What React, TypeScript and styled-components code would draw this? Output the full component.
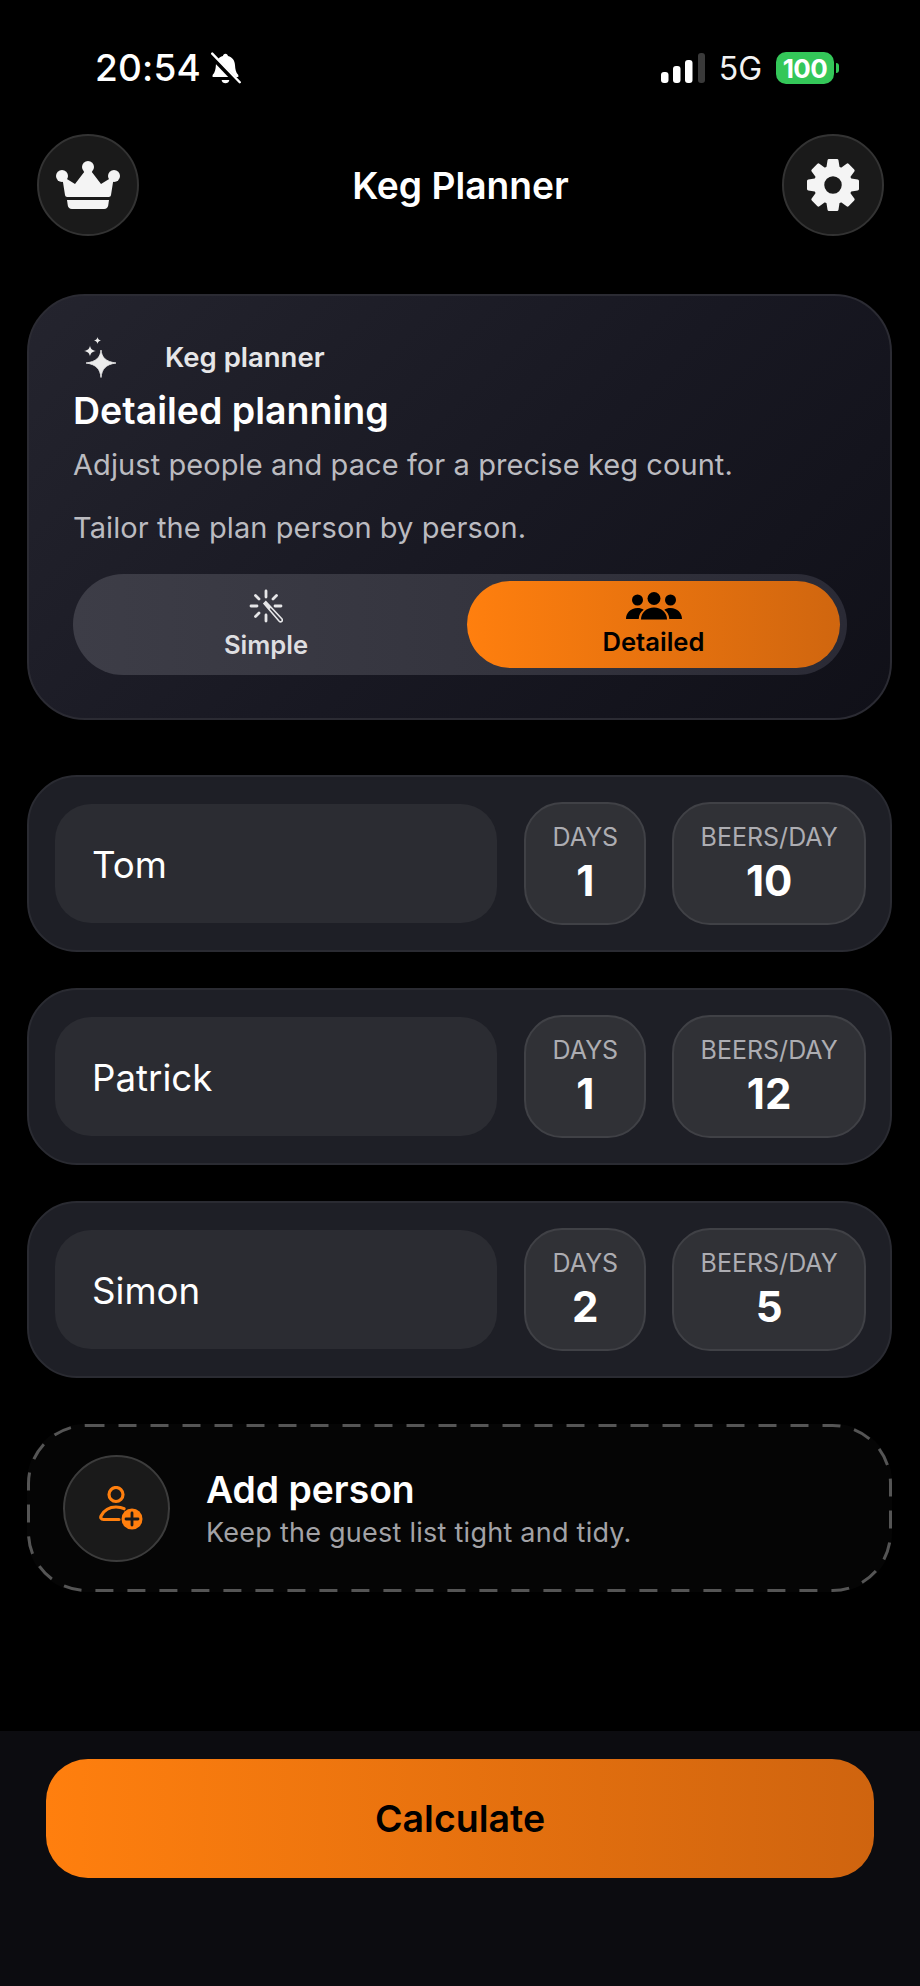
import React from 'react';
import styled, { createGlobalStyle } from 'styled-components';

const GlobalStyle = createGlobalStyle`
	html, body {
		margin: 0;
		padding: 0;
		background: #000;
		font-family: Inter, "Liberation Sans", sans-serif;
	}
	* {
		box-sizing: border-box;
	}
`;

const Page = styled.div`
	width: 920px;
	height: 1986px;
	display: flex;
	flex-direction: column;
	background: #000;
	color: #fff;
	overflow: hidden;
`;

const Main = styled.main`
	flex: 1;
	display: flex;
	flex-direction: column;
	padding: 0 28px 0 27px;
`;

const StatusBar = styled.div`
	height: 135px;
	margin: 0 -28px 0 -27px;
	padding: 46px 81px 0 95px;
	display: flex;
	justify-content: space-between;
	align-items: flex-start;
`;

const StatusLeft = styled.div`
	display: flex;
	align-items: center;
	gap: 10px;
	height: 44px;
`;

const StatusRight = styled.div`
	display: flex;
	align-items: center;
	height: 44px;
`;

const Clock = styled.span`
	font-size: 37px;
	font-weight: 500;
	line-height: 44px;
	letter-spacing: 0.2px;
`;

const NetworkLabel = styled.span`
	font-size: 32px;
	font-weight: 400;
	color: #f2f2f2;
	margin: 0 14px 0 14px;
`;

const Battery = styled.span`
	width: 58px;
	height: 32px;
	border-radius: 10px;
	background: #34c759;
	color: #fff;
	font-size: 26px;
	font-weight: 700;
	display: flex;
	align-items: center;
	justify-content: center;
	letter-spacing: -0.6px;
`;

const BatteryCap = styled.span`
	width: 3px;
	height: 10px;
	margin-left: 2px;
	border-radius: 0 3px 3px 0;
	background: #34c759;
`;

const Header = styled.header`
	height: 100px;
	margin: 0 8px 0 10px;
	display: flex;
	align-items: center;
	justify-content: space-between;
`;

const RoundButton = styled.div`
	width: 102px;
	height: 102px;
	border-radius: 50%;
	background: #1a1a1a;
	border: 2px solid #333;
	display: flex;
	align-items: center;
	justify-content: center;
`;

const Title = styled.h1`
	margin: 0;
	font-size: 37.2px;
	font-weight: 600;
	color: #fff;
`;

const HeroCard = styled.section`
	margin-top: 59px;
	height: 426px;
	border-radius: 58px;
	border: 2px solid #2b2b33;
	background: linear-gradient(135deg, #24242e 0%, #181822 55%, #101018 100%);
	padding: 38px 44px 0 44px;
	display: flex;
	flex-direction: column;
`;

const Eyebrow = styled.div`
	display: flex;
	align-items: center;
	height: 46px;
	color: #e6e6e8;
	font-size: 27.5px;
	font-weight: 600;
`;

const SparkleSlot = styled.span`
	width: 92px;
	padding-left: 9px;
	display: flex;
	align-items: center;
`;

const HeroTitle = styled.h2`
	margin: 6px 0 0;
	font-size: 37.5px;
	line-height: 50px;
	font-weight: 600;
	color: #fff;
`;

const HeroText = styled.p`
	margin: 8px 0 0;
	font-size: 29px;
	line-height: 42px;
	font-weight: 400;
	letter-spacing: 0.08px;
	color: #bbbbc0;

	& + & {
		margin-top: 21px;
	}
`;

const ModeSwitch = styled.div`
	margin-top: 25px;
	height: 101px;
	border-radius: 51px;
	background: linear-gradient(90deg, #3d3d47 0%, #34343e 55%, #2a2a35 100%);
	padding: 7px;
	display: grid;
	grid-template-columns: 387px 373px;
	margin-right: -1px;
`;

const ModeTab = styled.div<{ $active?: boolean }>`
	border-radius: 44px;
	display: flex;
	flex-direction: column;
	align-items: center;
	justify-content: center;
	padding-right: ${(p) => (p.$active ? '0' : '15px')};
	gap: ${(p) => (p.$active ? '7px' : '7px')};
	font-size: 25.6px;
	line-height: 30px;
	font-weight: 600;
	color: ${(p) => (p.$active ? '#000' : '#dedee0')};
	background: ${(p) => (p.$active ? 'linear-gradient(90deg, #ff7f0e 0%, #d0660f 100%)' : 'transparent')};
`;

const PeopleList = styled.div`
	margin-top: 55px;
	display: flex;
	flex-direction: column;
	gap: 36px;
`;

const PersonRow = styled.div`
	height: 177px;
	border-radius: 50px;
	background: #1e1f26;
	border: 2px solid #2a2b32;
	padding: 0 24px 0 26px;
	display: flex;
	align-items: center;
`;

const NameField = styled.div`
	width: 443px;
	height: 119px;
	border-radius: 36px;
	background: #2b2c32;
	padding: 2px 0 0 37px;
	margin-right: 27px;
	display: flex;
	align-items: center;
	font-size: 36.7px;
	font-weight: 400;
	color: #fff;
`;

const StatBox = styled.div<{ $wide?: boolean }>`
	width: ${(p) => (p.$wide ? '194px' : '122px')};
	height: 123px;
	margin-right: ${(p) => (p.$wide ? '0' : '26px')};
	border-radius: 38px;
	background: #303136;
	border: 2px solid #404146;
	display: flex;
	flex-direction: column;
	align-items: center;
	padding-top: 18px;
`;

const StatLabel = styled.span`
	font-size: 25px;
	line-height: 30px;
	font-weight: 400;
	color: #adadb2;
`;

const StatValue = styled.span`
	margin-top: 4px;
	font-size: 42px;
	line-height: 50px;
	font-weight: 700;
	color: #fff;
`;

const AddPerson = styled.div`
	position: relative;
	margin-top: 46px;
	height: 168px;
	border-radius: 58px;
	background: #050505;
	padding-left: 36px;
	display: flex;
	align-items: center;
	gap: 36px;
`;

const DashedOutline = styled.svg`
	position: absolute;
	top: 0;
	left: 0;
`;

const AddCircle = styled.div`
	width: 107px;
	height: 107px;
	padding-left: 8px;
	border-radius: 50%;
	background: #1a1a1a;
	border: 2px solid #3c3c3c;
	display: flex;
	align-items: center;
	justify-content: center;
`;

const AddText = styled.div`
	display: flex;
	flex-direction: column;
	padding-top: 3px;
`;

const AddTitle = styled.span`
	font-size: 37.3px;
	line-height: 44px;
	font-weight: 600;
	color: #fff;
`;

const AddHint = styled.span`
	margin-top: 3px;
	font-size: 27px;
	line-height: 36px;
	letter-spacing: 0.25px;
	color: #a2a2a6;
`;

const Footer = styled.footer`
	height: 255px;
	background: #0c0c10;
	padding: 28px 46px 0;
`;

const CalculateButton = styled.div`
	height: 119px;
	border-radius: 42px;
	background: linear-gradient(90deg, #ff7f0e 0%, #cf640f 100%);
	display: flex;
	align-items: center;
	justify-content: center;
	font-size: 37.5px;
	font-weight: 600;
	color: #000;
`;

const Icon = styled.svg`
	display: block;
	flex: none;
`;

const people = [
	{ name: 'Tom', days: 1, beers: 10 },
	{ name: 'Patrick', days: 1, beers: 12 },
	{ name: 'Simon', days: 2, beers: 5 },
];

const BellOff = () => (
	<Icon width="30" height="33" viewBox="2 0 27 30">
		<path d="M15 1.500c1.300 0 2.200.9 2.300 2.200 4 1 6.200 4.200 6.400 8.300.2 3.600.6 6.400 3 9v1.700H3.300V21c2.300-2.600 2.800-5.400 3-9 .2-4.100 2.400-7.300 6.400-8.300.1-1.300 1-2.200 2.300-2.200z" fill="#fff" />
		<path d="M11.500 25.500h7c-.3 1.900-1.700 3-3.500 3s-3.200-1.100-3.500-3z" fill="#fff" />
		<path d="M2 3l25 26" stroke="#000" strokeWidth="5" />
		<path d="M3 1.500l25 26" stroke="#fff" strokeWidth="2.200" strokeLinecap="round" />
	</Icon>
);

const SignalBars = () => (
	<Icon width="44" height="30" viewBox="0 0 44 30">
		<rect x="0" y="19" width="7.500" height="11" rx="3" fill="#fff" />
		<rect x="12" y="13" width="7.500" height="17" rx="3" fill="#fff" />
		<rect x="24" y="7" width="7.500" height="23" rx="3" fill="#fff" />
		<rect x="37" y="0" width="7" height="30" rx="3" fill="#3a3a3a" />
	</Icon>
);

const CrownIcon = () => (
	<Icon width="64" height="48" viewBox="0 0 64 48">
		<g fill="#f4f4f4">
			<circle cx="32" cy="6" r="6" />
			<circle cx="6" cy="15" r="6" />
			<circle cx="58" cy="15" r="6" />
			<path d="M6 15L19 23 32 6 45 23 58 15 55 34c-.2 1.200-1 2-2.200 2H11.200c-1.200 0-2-.8-2.200-2z" />
			<path d="M11 39h42l-.8 5.500c-.4 2.200-1.800 3.500-4 3.500H15.800c-2.200 0-3.600-1.300-4-3.500z" />
		</g>
	</Icon>
);

const GearIcon = () => {
	const teeth = [0, 45, 90, 135, 180, 225, 270, 315];
	return (
		<Icon width="54" height="54" viewBox="0 0 54 54">
			{teeth.map((a) => (
				<path
					key={a}
					d="M23 2.500h8l2 13H21z"
					fill="#f4f4f4"
					stroke="#f4f4f4"
					strokeWidth="3"
					strokeLinejoin="round"
					transform={`rotate(${a} 27 27)`}
				/>
			))}
			<circle cx="27" cy="27" r="14" fill="none" stroke="#f4f4f4" strokeWidth="10.500" />
		</Icon>
	);
};

const Sparkles = () => (
	<Icon width="34" height="42" viewBox="0 0 34 42">
		<path d="M19 14c.8 7.500 4.500 11.500 15 13-10.500 1.500-14 6-15 14.500-1-8.500-4.500-13-15-14.500 10.500-1.500 14.200-5.500 15-13z" fill="#ececec" stroke="#ececec" strokeWidth="0.800" strokeLinejoin="round" />
		<path d="M8 9.500c.5 3.200 2 4.800 6 5.500-4 .7-5.500 2.300-6 5.500-.5-3.200-2-4.800-6-5.500 4-.7 5.500-2.300 6-5.500z" fill="#ececec" />
		<path d="M15.500 1c.3 2 1.200 3 3.500 3.500-2.300.5-3.200 1.500-3.500 3.500-.3-2-1.200-3-3.500-3.500 2.300-.5 3.200-1.500 3.500-3.500z" fill="#ececec" />
	</Icon>
);

const WandRays = () => (
	<Icon width="34" height="34" viewBox="0 0 34 34">
		<g stroke="#e6e6e8" strokeWidth="2.800" strokeLinecap="round" fill="none">
			<path d="M17 2v6M17 26v6M2 17h6M26 17h6M6.500 6.500L10 10M27.500 6.500L24 10M6.500 27.500L10 24" />
		</g>
		<path d="M15 14.500l1.800-1.800 16 17c.8.900.8 1.900 0 2.600s-1.800.7-2.600-.1z" fill="none" stroke="#e6e6e8" strokeWidth="1.600" />
		<path d="M15 14.500l1.800-1.800 5.500 5.800-2.200 2.100z" fill="#e6e6e8" />
	</Icon>
);

const PeopleGroup = () => (
	<Icon width="56" height="28" viewBox="0 0 56 28">
		<circle cx="11.500" cy="8" r="5.500" fill="#000" />
		<circle cx="44.500" cy="8" r="5.500" fill="#000" />
		<circle cx="28" cy="6.500" r="6.500" fill="#000" />
		<path d="M0 27c0-6 4.500-11 11.500-11 2.500 0 4.500.6 6.200 1.700-3 2-4.700 5-5 9.300z" fill="#000" />
		<path d="M56 27c0-6-4.500-11-11.500-11-2.500 0-4.500.6-6.200 1.700 3 2 4.700 5 5 9.300z" fill="#000" />
		<path d="M15 27.500c0-7 5.500-12 13-12s13 5 13 12z" fill="#000" />
	</Icon>
);

const PersonAdd = () => (
	<Icon width="44" height="44" viewBox="0 0 44 44">
		<circle cx="17" cy="8.500" r="7" fill="none" stroke="#ff7f0e" strokeWidth="3.200" />
		<path d="M20 33.500H4.500c-2.500 0-3.300-1.800-2.300-3.800C5 24.500 10 21 17 21c3.500 0 6 .6 8 1.700" fill="none" stroke="#ff7f0e" strokeWidth="3.200" strokeLinecap="round" />
		<circle cx="33" cy="33" r="10.500" fill="#ff7f0e" />
		<path d="M33 27v12M27 33h12" stroke="#1a1a1a" strokeWidth="2.800" strokeLinecap="round" />
	</Icon>
);

const App: React.FC = () => (
	<>
		<GlobalStyle />
		<Page>
			<Main>
				<StatusBar>
					<StatusLeft>
						<Clock>20:54</Clock>
						<BellOff />
					</StatusLeft>
					<StatusRight>
						<SignalBars />
						<NetworkLabel>5G</NetworkLabel>
						<Battery>100</Battery>
						<BatteryCap />
					</StatusRight>
				</StatusBar>

				<Header>
					<RoundButton>
						<CrownIcon />
					</RoundButton>
					<Title>Keg Planner</Title>
					<RoundButton>
						<GearIcon />
					</RoundButton>
				</Header>

				<HeroCard>
					<Eyebrow>
						<SparkleSlot>
							<Sparkles />
						</SparkleSlot>
						Keg planner
					</Eyebrow>
					<HeroTitle>Detailed planning</HeroTitle>
					<HeroText>Adjust people and pace for a precise keg count.</HeroText>
					<HeroText>Tailor the plan person by person.</HeroText>
					<ModeSwitch>
						<ModeTab>
							<WandRays />
							Simple
						</ModeTab>
						<ModeTab $active>
							<PeopleGroup />
							Detailed
						</ModeTab>
					</ModeSwitch>
				</HeroCard>

				<PeopleList>
					{people.map((person) => (
						<PersonRow key={person.name}>
							<NameField>{person.name}</NameField>
							<StatBox>
								<StatLabel>DAYS</StatLabel>
								<StatValue>{person.days}</StatValue>
							</StatBox>
							<StatBox $wide>
								<StatLabel>BEERS/DAY</StatLabel>
								<StatValue>{person.beers}</StatValue>
							</StatBox>
						</PersonRow>
					))}
				</PeopleList>

				<AddPerson>
					<DashedOutline width="865" height="168" viewBox="0 0 865 168">
						<rect x="1.500" y="1.500" width="862" height="165" rx="58" fill="none" stroke="#555" strokeWidth="3" strokeDasharray="18 14" />
					</DashedOutline>
					<AddCircle>
						<PersonAdd />
					</AddCircle>
					<AddText>
						<AddTitle>Add person</AddTitle>
						<AddHint>Keep the guest list tight and tidy.</AddHint>
					</AddText>
				</AddPerson>
			</Main>

			<Footer>
				<CalculateButton>Calculate</CalculateButton>
			</Footer>
		</Page>
	</>
);

export default App;
